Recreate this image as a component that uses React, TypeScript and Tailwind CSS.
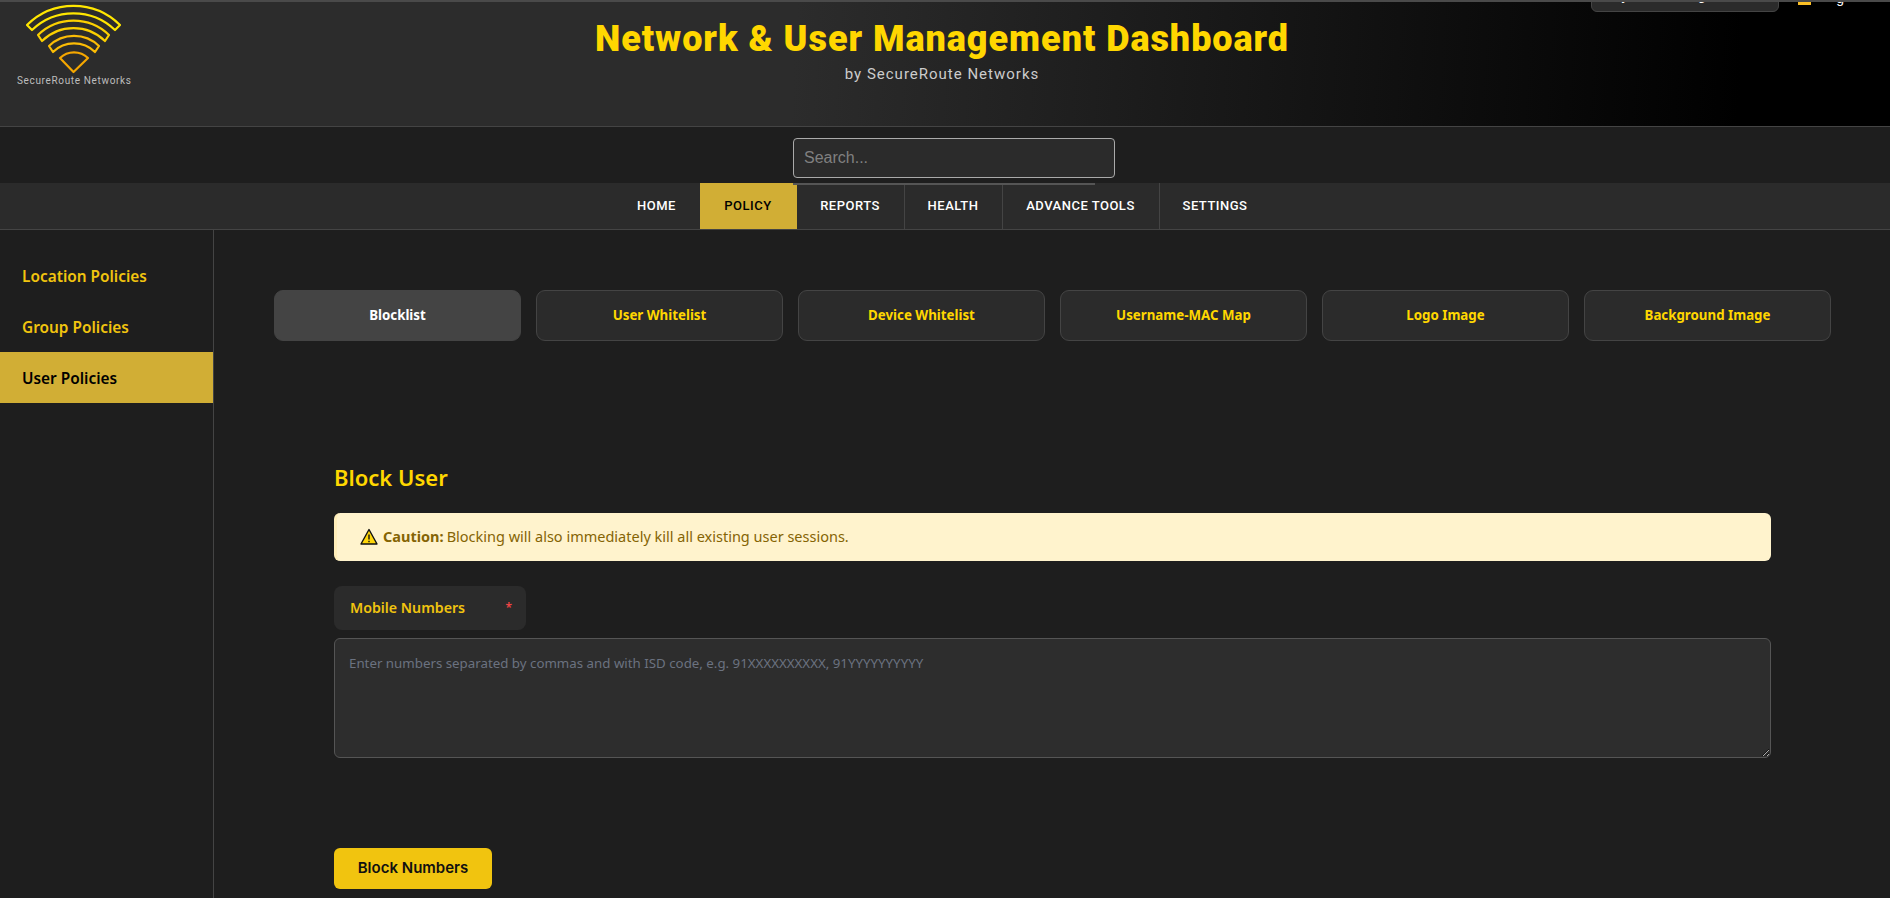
const navItems = [
  { label: "HOME", w: "w-[86px]", active: false, sep: false },
  { label: "POLICY", w: "w-[97px]", active: true, sep: false },
  { label: "REPORTS", w: "w-[108px]", active: false, sep: true },
  { label: "HEALTH", w: "w-[98px]", active: false, sep: true },
  { label: "ADVANCE TOOLS", w: "w-[157px]", active: false, sep: true },
  { label: "SETTINGS", w: "w-[111px]", active: false, sep: false },
];

const tabs = ["Blocklist", "User Whitelist", "Device Whitelist", "Username-MAC Map", "Logo Image", "Background Image"];

function Logo() {
  return (
    <div className="relative h-[90px] w-[150px]">
      <svg width="150" height="74" viewBox="0 0 150 74" fill="none" strokeWidth="2.2" strokeLinejoin="round">
        <path d="M27 23 A66 66 0 0 1 120 23 L115 28 A60 60 0 0 0 32 28 Z" stroke="#ffe600" />
        <path d="M38 33 A51 51 0 0 1 109 33 L105 39 A45 45 0 0 0 42 39 Z" stroke="#fcd000" />
        <path d="M49 44 A36 36 0 0 1 99 44 L95 50 A30 30 0 0 0 53 50 Z" stroke="#fbbc05" />
        <path d="M60 56 A20 20 0 0 1 88 56 L73.5 70 Z" stroke="#f5a700" />
      </svg>
      <div className="mt-[-1px] ml-[17px] whitespace-nowrap text-[10px] leading-[12px] tracking-[0.65px] text-[#bdbdbd] [font-family:Roboto,sans-serif]">
        SecureRoute Networks
      </div>
    </div>
  );
}

export default function App() {
  return (
    <div className="flex h-[898px] flex-col overflow-hidden bg-[#1e1e1e] [font-family:'Noto_Sans',sans-serif]">
      <header className="grid h-[127px] shrink-0 grid-cols-[1fr_auto_1fr] overflow-hidden border-t-2 border-b border-t-[#4a4a4a] border-b-[#444444] bg-[linear-gradient(93deg,#2c2c2c_42%,#000000_92%)]">
        <Logo />
        <div className="-translate-x-[3px] text-center">
          <h1 className="mt-[15px] text-[36px] leading-[44px] font-black tracking-[0.95px] whitespace-nowrap text-[#ffd700] [font-family:Roboto,sans-serif]">
            Network &amp; User Management Dashboard
          </h1>
          <p className="mt-[3px] text-[15px] leading-[20px] tracking-[1px] text-[#cccccc] [font-family:Roboto,sans-serif]">
            by SecureRoute Networks
          </p>
        </div>
        <div className="flex items-start justify-end">
          <div className="-mt-[20px] flex h-[30px] w-[188px] items-end rounded-b-md border border-[#444444] bg-[#2b2b2b] pb-[7px] pl-[20px] text-[14px] leading-[18px] text-white [font-family:'Liberation_Sans',sans-serif]">
            System Manager
          </div>
          <div className="-mt-[17px] ml-[19px] h-[20px] w-[13px] border-b-[3px] border-[#fbbf24]" />
          <div className="-mt-[13px] ml-[25px] mr-[46px] text-[14px] leading-[18px] text-white [font-family:'Liberation_Sans',sans-serif]">
            g
          </div>
        </div>
      </header>

      <div className="h-[56px] shrink-0 bg-[#1e1e1e]">
        <div className="mx-auto flex h-full w-[302px] -translate-x-[1px] flex-col justify-between">
          <input
            placeholder="Search..."
            className="mt-[11px] h-[40px] w-[322px] shrink-0 rounded-[4px] border border-[#aaaaaa] bg-[#2b2b2b] px-[10px] text-[16px] outline-none [font-family:'Liberation_Sans',sans-serif] placeholder:text-[#808080]"
          />
          <div className="h-[2px] w-full translate-y-[2px] bg-[#555555]" />
        </div>
      </div>

      <nav className="flex h-[47px] shrink-0 justify-center border-b border-[#444444] bg-[#2b2b2b] pr-[6px]">
        {navItems.map((n) => (
          <div
            key={n.label}
            className={`${n.w} flex items-center justify-center text-[13px] font-medium tracking-[0.5px] whitespace-nowrap [font-family:Roboto,sans-serif] ${
              n.active ? "bg-[#d1ae35] text-black" : "text-white"
            } ${n.sep ? "border-r border-[#444444]" : ""}`}
          >
            {n.label}
          </div>
        ))}
      </nav>

      <div className="flex min-h-0 flex-1">
        <aside className="w-[214px] shrink-0 border-r border-[#444444] pt-[20px]">
          {["Location Policies", "Group Policies", "User Policies"].map((s, i) => (
            <div
              key={s}
              className={`flex h-[51px] items-center pt-[2px] pl-[22px] text-[15.4px] font-semibold ${
                i === 2 ? "bg-[#d1ae35] text-black" : "text-[#f1c40f]"
              }`}
            >
              {s}
            </div>
          ))}
        </aside>

        <main className="min-w-0 flex-1 pt-[60px] pr-[59px] pl-[60px]">
          <div className="grid grid-cols-6 gap-[15px]">
            {tabs.map((t, i) => (
              <div
                key={t}
                className={`flex h-[51px] items-center justify-center rounded-[9px] border pt-[1px] text-[13.3px] font-bold ${
                  i === 0 ? "border-[#444444] bg-[#444444] text-white" : "border-[#444444] bg-[#2b2b2b] text-[#ffd700]"
                }`}
              >
                {t}
              </div>
            ))}
          </div>

          <section className="mx-[60px] mt-[120px] w-[1437px]">
            <h2 className="text-[22px] leading-[32px] font-semibold text-[#ffd700]">Block User</h2>
            <div className="mt-[20px] flex h-[48px] items-center rounded-[6px] border-l-[3px] border-[#ffeeba] bg-[#fff3cd] pl-[23px] text-[14.5px] text-[#856404]">
              <svg width="18" height="18" viewBox="0 0 18 18" className="mr-[5px] shrink-0">
                <path d="M9 1.5 L17 16 L1 16 Z" fill="#ffd60a" stroke="#111111" strokeWidth="1.4" strokeLinejoin="round" />
                <path d="M9 6.5 V11.5 M9 12.8 V14.2" stroke="#111111" strokeWidth="1.4" />
              </svg>
              <strong className="mr-[3px] font-bold">Caution:</strong>
              <span>Blocking will also immediately kill all existing user sessions.</span>
            </div>
            <div className="mt-[25px] flex h-[44px] w-[192px] items-center justify-between rounded-[8px] bg-[#2b2b2b] pr-[14px] pl-[16px] text-[14.2px] font-semibold text-[#f1c40f]">
              <span>Mobile Numbers</span>
              <span className="-mt-[1px] text-[12px] text-[#ef4444]">*</span>
            </div>
            <textarea
              placeholder="Enter numbers separated by commas and with ISD code, e.g. 91XXXXXXXXXX, 91YYYYYYYYYY"
              className="mt-[8px] block h-[120px] w-full rounded-[6px] border border-[#555555] bg-[#2d2d2d] px-[14px] py-[14px] text-[13.3px] leading-[20px] outline-none placeholder:text-[#6b7280]"
            />
            <button className="mt-[90px] h-[41px] w-[158px] rounded-[6px] bg-[#f1c40f] text-[15px] font-semibold text-[#111111] [font-family:Inter,sans-serif]">
              Block Numbers
            </button>
          </section>
        </main>
      </div>
    </div>
  );
}
